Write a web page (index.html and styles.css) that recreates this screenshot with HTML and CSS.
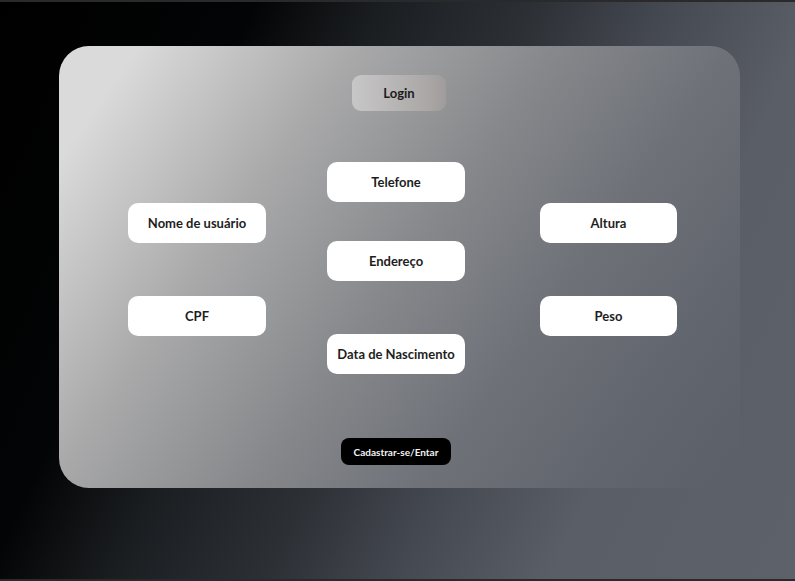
FILE: index.html
```html
<!DOCTYPE html>
<html lang="pt-BR">
<head>
<meta charset="utf-8">
<title>Login</title>
<link rel="stylesheet" href="styles.css">
</head>
<body>
<div class="screen">
  <div class="card">
    <div class="title-row"><div class="login">Login</div></div>
    <div class="fields">
      <div class="col col-side">
        <div class="field">Nome de usuário</div>
        <div class="field">CPF</div>
      </div>
      <div class="col col-mid">
        <div class="field">Telefone</div>
        <div class="field gap-small">Endereço</div>
        <div class="field">Data de Nascimento</div>
      </div>
      <div class="col col-side col-right">
        <div class="field">Altura</div>
        <div class="field">Peso</div>
      </div>
    </div>
    <div class="action-row"><button class="submit">Cadastrar-se/Entar</button></div>
  </div>
</div>
</body>
</html>
```
FILE: styles.css
```css
html, body { margin: 0; padding: 0; }
body {
  width: 795px;
  height: 581px;
  overflow: hidden;
  font-family: "Lato", "Open Sans", sans-serif;
}
.screen {
  box-sizing: border-box;
  width: 795px;
  height: 581px;
  border-top: 2px solid #2a2a2c;
  border-bottom: 2px solid #2a2a2c;
  background: linear-gradient(115deg, #000 0%, #030405 24%, #1b1e21 36%, #2c2f34 50%, #454952 63%, #5a5e67 77%, #5d616a 100%);
  padding-top: 44px;
  padding-left: 59px;
}
.card {
  box-sizing: border-box;
  width: 681px;
  height: 442px;
  border-radius: 30px;
  background: linear-gradient(125deg, #dadada 8%, #a9a9aa 30%, #86888b 50%, #6e7178 68%, #61656d 85%, #5b5f68 100%);
  padding-top: 29px;
}
.title-row {
  display: flex;
  justify-content: center;
  padding-right: 1px;
}
.login {
  width: 94px;
  height: 36px;
  border-radius: 9px;
  background: linear-gradient(90deg, #c8c7c8, #aba7a7 80%, #a09c9c);
  display: flex;
  align-items: center;
  justify-content: center;
  font-weight: 700;
  font-size: 13px;
  color: #1c1c1c;
}
.fields {
  display: flex;
  padding-left: 69px;
  margin-top: 51px;
  height: 212px;
}
.col {
  display: flex;
  flex-direction: column;
  width: 138px;
}
.col-side { padding-top: 41px; gap: 53px; }
.col-mid { margin-left: 61px; gap: 53px; }
.col-mid .gap-small { margin-top: -14px; }
.col-right { margin-left: 75px; width: 137px; }
.field {
  height: 40px;
  border-radius: 10px;
  background: #fff;
  display: flex;
  align-items: center;
  justify-content: center;
  font-weight: 700;
  font-size: 13px;
  color: #1e1e1e;
  white-space: nowrap;
}
.action-row {
  display: flex;
  justify-content: center;
  padding-right: 7px;
  margin-top: 64px;
}
.submit {
  width: 110px;
  height: 27px;
  border: none;
  border-radius: 8px;
  background: #000;
  color: #f2f2f2;
  font-family: "Lato", sans-serif;
  font-weight: 700;
  font-size: 10px;
  padding: 0;
}
```
